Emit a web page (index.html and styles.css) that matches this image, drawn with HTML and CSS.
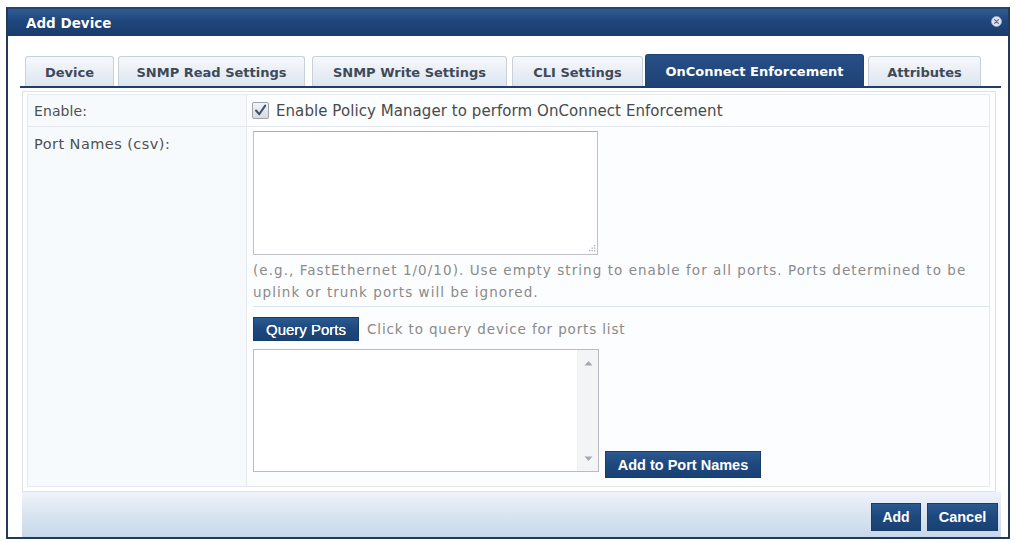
FILE: index.html
```html
<!DOCTYPE html>
<html>
<head>
<meta charset="utf-8">
<link rel="stylesheet" href="styles.css">
</head>
<body>
<div class="dialog">
  <div class="titlebar">
    <span class="title">Add Device</span>
    <svg class="close" width="11" height="11" viewBox="0 0 11 11">
      <circle cx="5.5" cy="5.5" r="5" fill="#dfe5ee" stroke="#9fb0c6" stroke-width="0.8"/>
      <path d="M3.6 3.6 L7.4 7.4 M7.4 3.6 L3.6 7.4" stroke="#5a6f8c" stroke-width="1.3" stroke-linecap="round"/>
    </svg>
  </div>
  <div class="content">
    <div class="tabs">
      <div class="tab tab-device">Device</div>
      <div class="tab tab-read">SNMP Read Settings</div>
      <div class="tab tab-write">SNMP Write Settings</div>
      <div class="tab tab-cli">CLI Settings</div>
      <div class="tab tab-onconnect active">OnConnect Enforcement</div>
      <div class="tab tab-attr">Attributes</div>
    </div>
    <div class="panel">
      <div class="form">
        <div class="row row-enable">
          <div class="label">Enable:</div>
          <div class="value value-enable">
            <svg class="checkbox" width="17" height="17" viewBox="0 0 17 17">
              <defs>
                <linearGradient id="cbg" x1="0" y1="0" x2="0" y2="1">
                  <stop offset="0" stop-color="#f4f5f7"/>
                  <stop offset="1" stop-color="#d5d8dd"/>
                </linearGradient>
              </defs>
              <rect x="0.5" y="0.5" width="16" height="16" rx="1.5" fill="url(#cbg)" stroke="#9ea4ad"/>
              <path d="M4 8.5 L7.2 12.2 L13.2 3.6" fill="none" stroke="#3d4f6f" stroke-width="2" stroke-linecap="round" stroke-linejoin="round"/>
            </svg>
            <span class="enable-text">Enable Policy Manager to perform OnConnect Enforcement</span>
          </div>
        </div>
        <div class="row row-ports">
          <div class="label">Port Names (csv):</div>
          <div class="value value-ports">
            <div class="textarea">
              <svg class="grip" width="9" height="9" viewBox="0 0 9 9">
                <g fill="#a9afb8">
                  <rect x="7" y="1" width="1.3" height="1.3"/>
                  <rect x="4.5" y="3.5" width="1.3" height="1.3"/>
                  <rect x="7" y="3.5" width="1.3" height="1.3"/>
                  <rect x="2" y="6" width="1.3" height="1.3"/>
                  <rect x="4.5" y="6" width="1.3" height="1.3"/>
                  <rect x="7" y="6" width="1.3" height="1.3"/>
                </g>
              </svg>
            </div>
            <div class="help">(e.g., FastEthernet 1/0/10). Use empty string to enable for all ports. Ports determined to be uplink or trunk ports will be ignored.</div>
            <div class="sep"></div>
            <div class="query-row">
              <button class="btn btn-query">Query Ports</button>
              <span class="query-hint">Click to query device for ports list</span>
            </div>
            <div class="list-row">
              <div class="listbox">
                <div class="list-area"></div>
                <div class="scrollbar">
                  <svg width="9" height="6" viewBox="0 0 9 6"><path d="M0.5 5.5 L4.5 1 L8.5 5.5 Z" fill="#a4a9b0"/></svg>
                  <svg width="9" height="6" viewBox="0 0 9 6"><path d="M0.5 0.5 L4.5 5 L8.5 0.5 Z" fill="#a4a9b0"/></svg>
                </div>
              </div>
              <button class="btn btn-addports">Add to Port Names</button>
            </div>
          </div>
        </div>
      </div>
    </div>
    <div class="footer">
      <button class="btn btn-add">Add</button>
      <button class="btn btn-cancel">Cancel</button>
    </div>
  </div>
</div>
</body>
</html>
```

FILE: styles.css
```css
* { box-sizing: border-box; }

html, body {
  margin: 0;
  padding: 0;
  background: #ffffff;
}

body {
  font-family: "DejaVu Sans", Verdana, sans-serif;
  color: #4e4e4e;
}

.dialog {
  margin: 7px 5px 0 6px;
  width: 1004px;
  height: 532px;
  border: 2px solid #22395a;
  border-top-color: #27456e;
  background: #ffffff;
  display: flex;
  flex-direction: column;
}

.titlebar {
  height: 27px;
  flex: none;
  background: linear-gradient(#2f5c96 0%, #1f467c 45%, #1a3c6c 100%);
  display: flex;
  align-items: center;
  justify-content: space-between;
  padding: 0 6px 0 18px;
}

.title {
  color: #ffffff;
  font-weight: bold;
  font-size: 13.5px;
  text-shadow: 0 0 1px rgba(0,0,0,0.4);
  padding-top: 1px;
}

.close {
  margin-top: -3px;
}

.content {
  flex: 1;
  display: flex;
  flex-direction: column;
  padding: 0 7px 0 12px;
}

.tabs {
  margin-top: 20px;
  height: 32px;
  flex: none;
  display: flex;
  align-items: flex-end;
  padding-left: 5px;
  border-bottom: 2px solid #1d3f6c;
}

.tab {
  height: 30px;
  margin-right: 4px;
  display: flex;
  align-items: center;
  justify-content: center;
  font-size: 13px;
  font-weight: bold;
  color: #3f4a58;
  background: linear-gradient(#f6f8fb 0%, #e9eef5 55%, #dce5f0 100%);
  border: 1px solid #c8d0da;
  border-bottom: none;
  border-radius: 3px 3px 0 0;
  padding-top: 2px;
}

.tab.active {
  height: 32px;
  color: #ffffff;
  background: linear-gradient(#284f86 0%, #1d4276 100%);
  border-color: #1d4276;
}

.tab-device { width: 89px; }
.tab-read { width: 187px; }
.tab-write { width: 195px; margin-left: 3px; }
.tab-cli { width: 131px; margin-left: 1px; }
.tab-onconnect { width: 219px; margin-left: -2px; }
.tab-attr { width: 113px; }

.panel {
  flex: none;
  margin: 3px 5px 0 2px;
  border: 1px solid #dfe3e8;
  padding: 2px 5px 4px 4px;
  background: #ffffff;
}

.form {
  border: 1px solid #e6eaee;
  display: flex;
  flex-direction: column;
}

.row {
  display: flex;
}

.row-enable {
  height: 32px;
  border-bottom: 1px solid #e4e8ec;
}

.label {
  width: 219px;
  flex: none;
  padding-left: 6px;
  font-size: 14px;
  letter-spacing: 0.4px;
  color: #505050;
  background: #f6fafd;
  border-right: 1px solid #e6eaee;
}

.row-enable .label {
  display: flex;
  align-items: center;
  letter-spacing: 0.1px;
}

.row-ports .label {
  padding-top: 9px;
  font-size: 14.5px;
  letter-spacing: 0.45px;
}

.value {
  flex: 1;
  background: #fcfdfe;
}

.value-enable {
  display: flex;
  align-items: center;
  padding-left: 5px;
}

.checkbox {
  flex: none;
  margin-right: 7px;
}

.enable-text {
  font-size: 15px;
  letter-spacing: 0.07px;
  color: #4a4a4a;
}

.value-ports {
  padding: 4px 0 8px 6px;
  display: flex;
  flex-direction: column;
}

.textarea {
  position: relative;
  width: 345px;
  height: 124px;
  border: 1px solid #bfc3c8;
  border-top-color: #a9aeb4;
  background: #ffffff;
}

.grip {
  position: absolute;
  right: 1px;
  bottom: 1px;
}

.help {
  margin-top: 4px;
  font-size: 13.5px;
  letter-spacing: 1.05px;
  line-height: 22px;
  color: #8a8a8a;
  padding-right: 6px;
}

.sep {
  margin-top: 3px;
  height: 1px;
  background: #dde5ec;
}

.query-row {
  margin-top: 10px;
  display: flex;
  align-items: center;
}

.btn {
  font-family: "Liberation Sans", Arial, sans-serif;
  font-weight: bold;
  font-size: 14px;
  color: #ffffff;
  background: linear-gradient(#2b5991 0%, #1e487d 50%, #1a4174 100%);
  border: 1px solid #173d6b;
  border-radius: 0;
  padding: 0;
  margin: 0;
  cursor: pointer;
}

.btn-query {
  width: 106px;
  height: 24px;
  font-weight: normal;
  font-size: 15px;
  text-shadow: 0 0 0.6px #ffffff;
}

.query-hint {
  margin-left: 8px;
  font-size: 13.5px;
  letter-spacing: 0.85px;
  color: #8a8a8a;
}

.list-row {
  margin-top: 8px;
  display: flex;
  align-items: flex-end;
}

.listbox {
  width: 346px;
  height: 123px;
  border: 1px solid #b8bcc2;
  background: #ffffff;
  display: flex;
  margin-bottom: 6px;
}

.list-area {
  flex: 1;
}

.scrollbar {
  width: 21px;
  background: #f3f4f5;
  border-left: 1px solid #eceef0;
  display: flex;
  flex-direction: column;
  justify-content: space-between;
  align-items: center;
  padding: 10px 0 9px 0;
}

.btn-addports {
  margin-left: 6px;
  width: 156px;
  height: 27px;
  font-size: 14.5px;
}

.footer {
  margin: 0 0 0 2px;
  flex: 1;
  background: linear-gradient(#eef2fa 0%, #dde7f2 40%, #c7d8ea 100%);
  border-top: 1px solid #eef1f5;
  display: flex;
  justify-content: flex-end;
  align-items: flex-start;
  padding: 10px 3px 0 0;
}

.btn-add {
  width: 50px;
  height: 28px;
}

.btn-cancel {
  margin-left: 6px;
  width: 71px;
  height: 28px;
  font-size: 14.5px;
}
```
